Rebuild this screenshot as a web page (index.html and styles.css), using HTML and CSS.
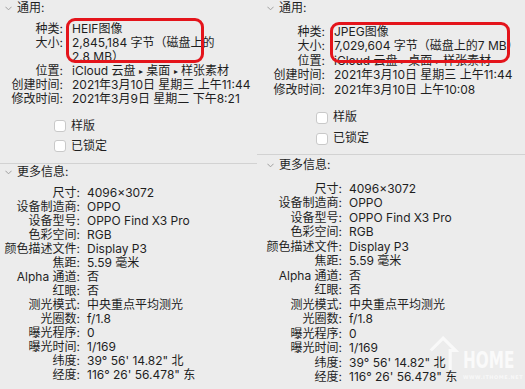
FILE: index.html
```html
<!DOCTYPE html>
<html lang="zh-CN">
<head>
    <meta charset="UTF-8">
    <title>简介 - HEIF / JPEG</title>
    <link rel="stylesheet" href="styles.css">
</head>
<body>
    <div class="compare">
        <section class="panel panel-heif">
            <div class="group group-general">
                <div class="group-head"><svg class="chev" viewBox="0 0 8 5"><polyline points="0.5,0.5 4,4 7.5,0.5"/></svg>通用:</div>
                <dl class="props">
                    <dt>种类:</dt><dd>HEIF图像</dd>
                    <dt>大小:</dt><dd>2,845,184 字节（磁盘上的<br>2.8 MB）</dd>
                    <dt>位置:</dt><dd>iCloud 云盘 <span class="sep">▸</span> 桌面 <span class="sep">▸</span> 样张素材</dd>
                    <dt>创建时间:</dt><dd>2021年3月10日 星期三 上午11:44</dd>
                    <dt>修改时间:</dt><dd>2021年3月9日 星期二 下午8:21</dd>
                </dl>
                <div class="checks">
                    <label class="check"><span class="box"></span>样版</label>
                    <label class="check"><span class="box"></span>已锁定</label>
                </div>
            </div>
            <div class="group group-more">
                <div class="group-head"><svg class="chev" viewBox="0 0 8 5"><polyline points="0.5,0.5 4,4 7.5,0.5"/></svg>更多信息:</div>
                <dl class="props">
                    <dt>尺寸:</dt><dd>4096×3072</dd>
                    <dt>设备制造商:</dt><dd>OPPO</dd>
                    <dt>设备型号:</dt><dd>OPPO Find X3 Pro</dd>
                    <dt>色彩空间:</dt><dd>RGB</dd>
                    <dt>颜色描述文件:</dt><dd>Display P3</dd>
                    <dt>焦距:</dt><dd>5.59 毫米</dd>
                    <dt>Alpha 通道:</dt><dd>否</dd>
                    <dt>红眼:</dt><dd>否</dd>
                    <dt>测光模式:</dt><dd>中央重点平均测光</dd>
                    <dt>光圈数:</dt><dd>f/1.8</dd>
                    <dt>曝光程序:</dt><dd>0</dd>
                    <dt>曝光时间:</dt><dd>1/169</dd>
                    <dt>纬度:</dt><dd>39° 56' 14.82" 北</dd>
                    <dt>经度:</dt><dd>116° 26' 56.478" 东</dd>
                </dl>
            </div>
            <div class="mark mark-heif"></div>
        </section>

        <section class="panel panel-jpeg">
            <div class="group group-general">
                <div class="group-head"><svg class="chev" viewBox="0 0 8 5"><polyline points="0.5,0.5 4,4 7.5,0.5"/></svg>通用:</div>
                <dl class="props">
                    <dt>种类:</dt><dd>JPEG图像</dd>
                    <dt>大小:</dt><dd>7,029,604 字节（磁盘上的7 MB）</dd>
                    <dt>位置:</dt><dd>iCloud 云盘 <span class="sep">▸</span> 桌面 <span class="sep">▸</span> 样张素材</dd>
                    <dt>创建时间:</dt><dd>2021年3月10日 星期三 上午11:44</dd>
                    <dt>修改时间:</dt><dd>2021年3月10日 上午10:08</dd>
                </dl>
                <div class="checks">
                    <label class="check"><span class="box"></span>样版</label>
                    <label class="check"><span class="box"></span>已锁定</label>
                </div>
            </div>
            <div class="group group-more">
                <div class="group-head"><svg class="chev" viewBox="0 0 8 5"><polyline points="0.5,0.5 4,4 7.5,0.5"/></svg>更多信息:</div>
                <dl class="props">
                    <dt>尺寸:</dt><dd>4096×3072</dd>
                    <dt>设备制造商:</dt><dd>OPPO</dd>
                    <dt>设备型号:</dt><dd>OPPO Find X3 Pro</dd>
                    <dt>色彩空间:</dt><dd>RGB</dd>
                    <dt>颜色描述文件:</dt><dd>Display P3</dd>
                    <dt>焦距:</dt><dd>5.59 毫米</dd>
                    <dt>Alpha 通道:</dt><dd>否</dd>
                    <dt>红眼:</dt><dd>否</dd>
                    <dt>测光模式:</dt><dd>中央重点平均测光</dd>
                    <dt>光圈数:</dt><dd>f/1.8</dd>
                    <dt>曝光程序:</dt><dd>0</dd>
                    <dt>曝光时间:</dt><dd>1/169</dd>
                    <dt>纬度:</dt><dd>39° 56' 14.82" 北</dd>
                    <dt>经度:</dt><dd>116° 26' 56.478" 东</dd>
                </dl>
            </div>
            <div class="mark mark-jpeg"></div>
            <div class="watermark">
                <svg class="wm-house" viewBox="0 0 34 40"><polyline points="2,16 16,2 30,16 24,16 24,38"/></svg>
                <span class="wm-word">HOME</span>
                <span class="wm-url">WWW.ITHOME.NET</span>
            </div>
        </section>
    </div>
</body>
</html>
```

FILE: styles.css
```css
:root {
    --bg: #ececec; --text: #1f1f1f; --rule: #d2d2d2;
    --chev: #9c9c9c; --box-border: #c9c9c9; --mark: #e4141b;
}
* { box-sizing: border-box; }
html, body { margin: 0; background: var(--bg); }
body { font-family: Inter, "Noto Sans CJK SC", sans-serif; font-size: 12px; color: var(--text); width: 525px; height: 389px; overflow: hidden; }

.compare { display: flex; align-items: flex-start; height: 389px; }
.panel { position: relative; flex: none; height: 389px; }
.panel-heif { width: 257px; --lh: 14px; --head-gap: 7px; --check-h: 20px; --rule-gap: 7px; --more-top: 1px; }
.panel-jpeg { width: 268px; padding-left: 5px; --lh: 14.5px; --head-gap: 9px; --check-h: 21px; --rule-gap: 4.5px; --more-top: 3.5px; }

.group-general { padding-top: 1px; padding-bottom: var(--rule-gap); }
.group-more { border-top: 1px solid var(--rule); padding-top: var(--more-top); }
.panel-jpeg .group-more { margin-left: -5px; padding-left: 5px; }

.group-head { display: flex; align-items: center; height: var(--lh); line-height: var(--lh); padding-left: 5px; gap: 5px; }
.chev { width: 7px; height: 5px; fill: none; stroke: var(--chev); stroke-width: 1.1; }

.props { display: grid; grid-template-columns: 72px 1fr; margin: var(--head-gap) 0 0; line-height: var(--lh); }
.group-more .props { grid-template-columns: 87px 1fr; }
.props dt { text-align: right; white-space: nowrap; padding-right: 9px; }
.group-more .props dt { padding-right: 7px; }
.props dd { margin: 0; white-space: nowrap; }
.sep { font-size: 8px; line-height: 0; vertical-align: 1px; }

.checks { margin-top: 10px; padding-left: 54px; }
.check { display: flex; align-items: center; gap: 5px; height: var(--check-h); line-height: var(--lh); }
.box { width: 12px; height: 12px; background: #fff; border: 1px solid var(--box-border); border-radius: 3px; }

/* red annotation boxes drawn over the screenshot */
.mark { position: absolute; border: 3px solid var(--mark); border-radius: 9px; }
.mark-heif { left: 66px; top: 18px; width: 138px; height: 45px; }
.mark-jpeg { left: 73px; top: 22px; width: 180px; height: 41px; }

.watermark { position: absolute; left: 172px; top: 336px; width: 90px; height: 44px; color: rgba(255, 255, 255, 0.75); }
.wm-house { position: absolute; left: 0; top: 0; width: 30px; height: 36px; fill: none; stroke: rgba(255, 255, 255, 0.7); stroke-width: 3.5; }
.wm-word { position: absolute; left: 34px; top: 9px; font-family: "DejaVu Sans Condensed", "DejaVu Sans", sans-serif; font-weight: bold; font-size: 17px; line-height: 22px; transform: scaleY(1.35); transform-origin: left top; }
.wm-url { position: absolute; left: 34px; top: 38px; font-family: "DejaVu Sans", sans-serif; font-weight: bold; font-size: 5px; letter-spacing: 0.5px; color: rgba(255, 255, 255, 0.65); }
```
